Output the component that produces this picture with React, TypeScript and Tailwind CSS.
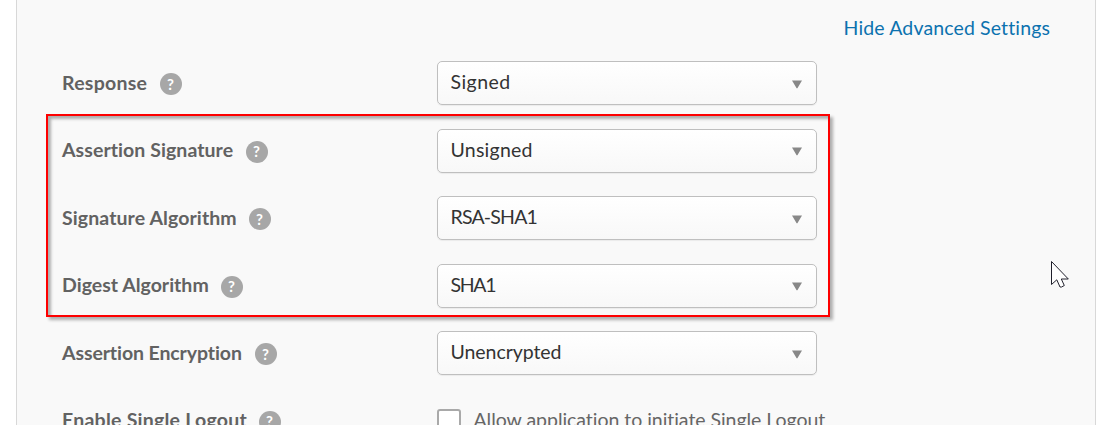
import React from "react";

type Row = {
  label: string;
  labelClass: string;
  value?: string;
  valueClass?: string;
};

const rows: Row[] = [
  { label: "Response", labelClass: "w-[97.5px] tracking-[0.26px]", value: "Signed", valueClass: "tracking-[0.45px]" },
  { label: "Assertion Signature", labelClass: "w-[183.5px] tracking-[0.07px]", value: "Unsigned", valueClass: "tracking-[0.25px]" },
  { label: "Signature Algorithm", labelClass: "w-[186.5px] tracking-[0.1px]", value: "RSA-SHA1", valueClass: "tracking-[-0.8px]" },
  { label: "Digest Algorithm", labelClass: "w-[158.5px] tracking-[0.01px]", value: "SHA1", valueClass: "tracking-[-1.3px]" },
  { label: "Assertion Encryption", labelClass: "w-[192.5px] tracking-[-0.1px]", value: "Unencrypted", valueClass: "tracking-[-0.05px]" },
  { label: "Enable Single Logout", labelClass: "w-[196.5px] tracking-[0.24px]" },
];

function HelpIcon() {
  return (
    <span className="mt-[12px] flex h-[22px] w-[22px] shrink-0 items-center justify-center rounded-full bg-[#a7a7a7] text-[15px] leading-none font-bold text-white">
      ?
    </span>
  );
}

function Select({ value, className }: { value: string; className?: string }) {
  return (
    <div className="flex h-[44px] w-[380px] items-start justify-between rounded-[5px] border border-[#bfbfbf] bg-linear-to-b from-white to-[#f8f8f8] pr-[14px] pl-[12.5px] shadow-[0_1px_1px_rgba(0,0,0,0.06)]">
      <span className={`pt-[7.4px] text-[19.5px] leading-[26px] whitespace-nowrap text-[#333] ${className}`}>{value}</span>
      <svg className="mt-[17.8px]" width="10" height="9" viewBox="0 0 10 9">
        <path d="M0 0.5H10L5.4 8.3H4.6Z" fill="#888" />
      </svg>
    </div>
  );
}

export default function App() {
  return (
    <div className="relative h-[425px] w-[1113px] overflow-hidden bg-white pl-4 font-['Lato',sans-serif] [font-variant-ligatures:none]">
      <main className="h-[425px] w-[1080px] border-x border-[#d8d8d8] bg-[#f9f9f9] pl-[45px]">
        <div className="flex h-[61px] justify-end pt-[15px] pr-[45px]">
          <a className="text-[19.5px] leading-[26px] tracking-[0.13px] whitespace-nowrap text-[#0c72af]">Hide Advanced Settings</a>
        </div>
        {rows.map((row) => (
          <div key={row.label} className="flex h-[67.5px] items-start">
            <div className="flex w-[375px] items-start">
              <span className={`shrink-0 pt-[8.7px] text-[19.5px] leading-[26px] font-bold whitespace-nowrap text-[#626262] ${row.labelClass}`}>
                {row.label}
              </span>
              <HelpIcon />
            </div>
            {row.value ? (
              <Select value={row.value} className={row.valueClass} />
            ) : (
              <div className="flex items-start">
                <span className="mt-[10px] h-[24px] w-[24px] rounded-[3px] border-2 border-[#a9a9a9] bg-white" />
                <span className="pt-[8.7px] pl-[12.5px] text-[19.5px] leading-[26px] tracking-[-0.04px] whitespace-nowrap text-[#666]">
                  Allow application to initiate Single Logout
                </span>
              </div>
            )}
          </div>
        ))}
      </main>
      <div className="absolute top-[114px] left-[46px] h-[203px] w-[784px] border-2 border-[#fe0000] shadow-[3px_3px_3px_rgba(0,0,0,0.3),inset_3px_3px_3px_rgba(0,0,0,0.3)]" />
      <svg className="absolute top-[260px] left-[1050px]" width="20" height="30" viewBox="0 0 20 30">
        <path d="M1.5 1.5V24.5L6.8 19.8L10 27H11.5L14.3 25.5L11.3 19H18.3Z" fill="#fff" stroke="#20202c" strokeWidth="1" />
      </svg>
    </div>
  );
}
